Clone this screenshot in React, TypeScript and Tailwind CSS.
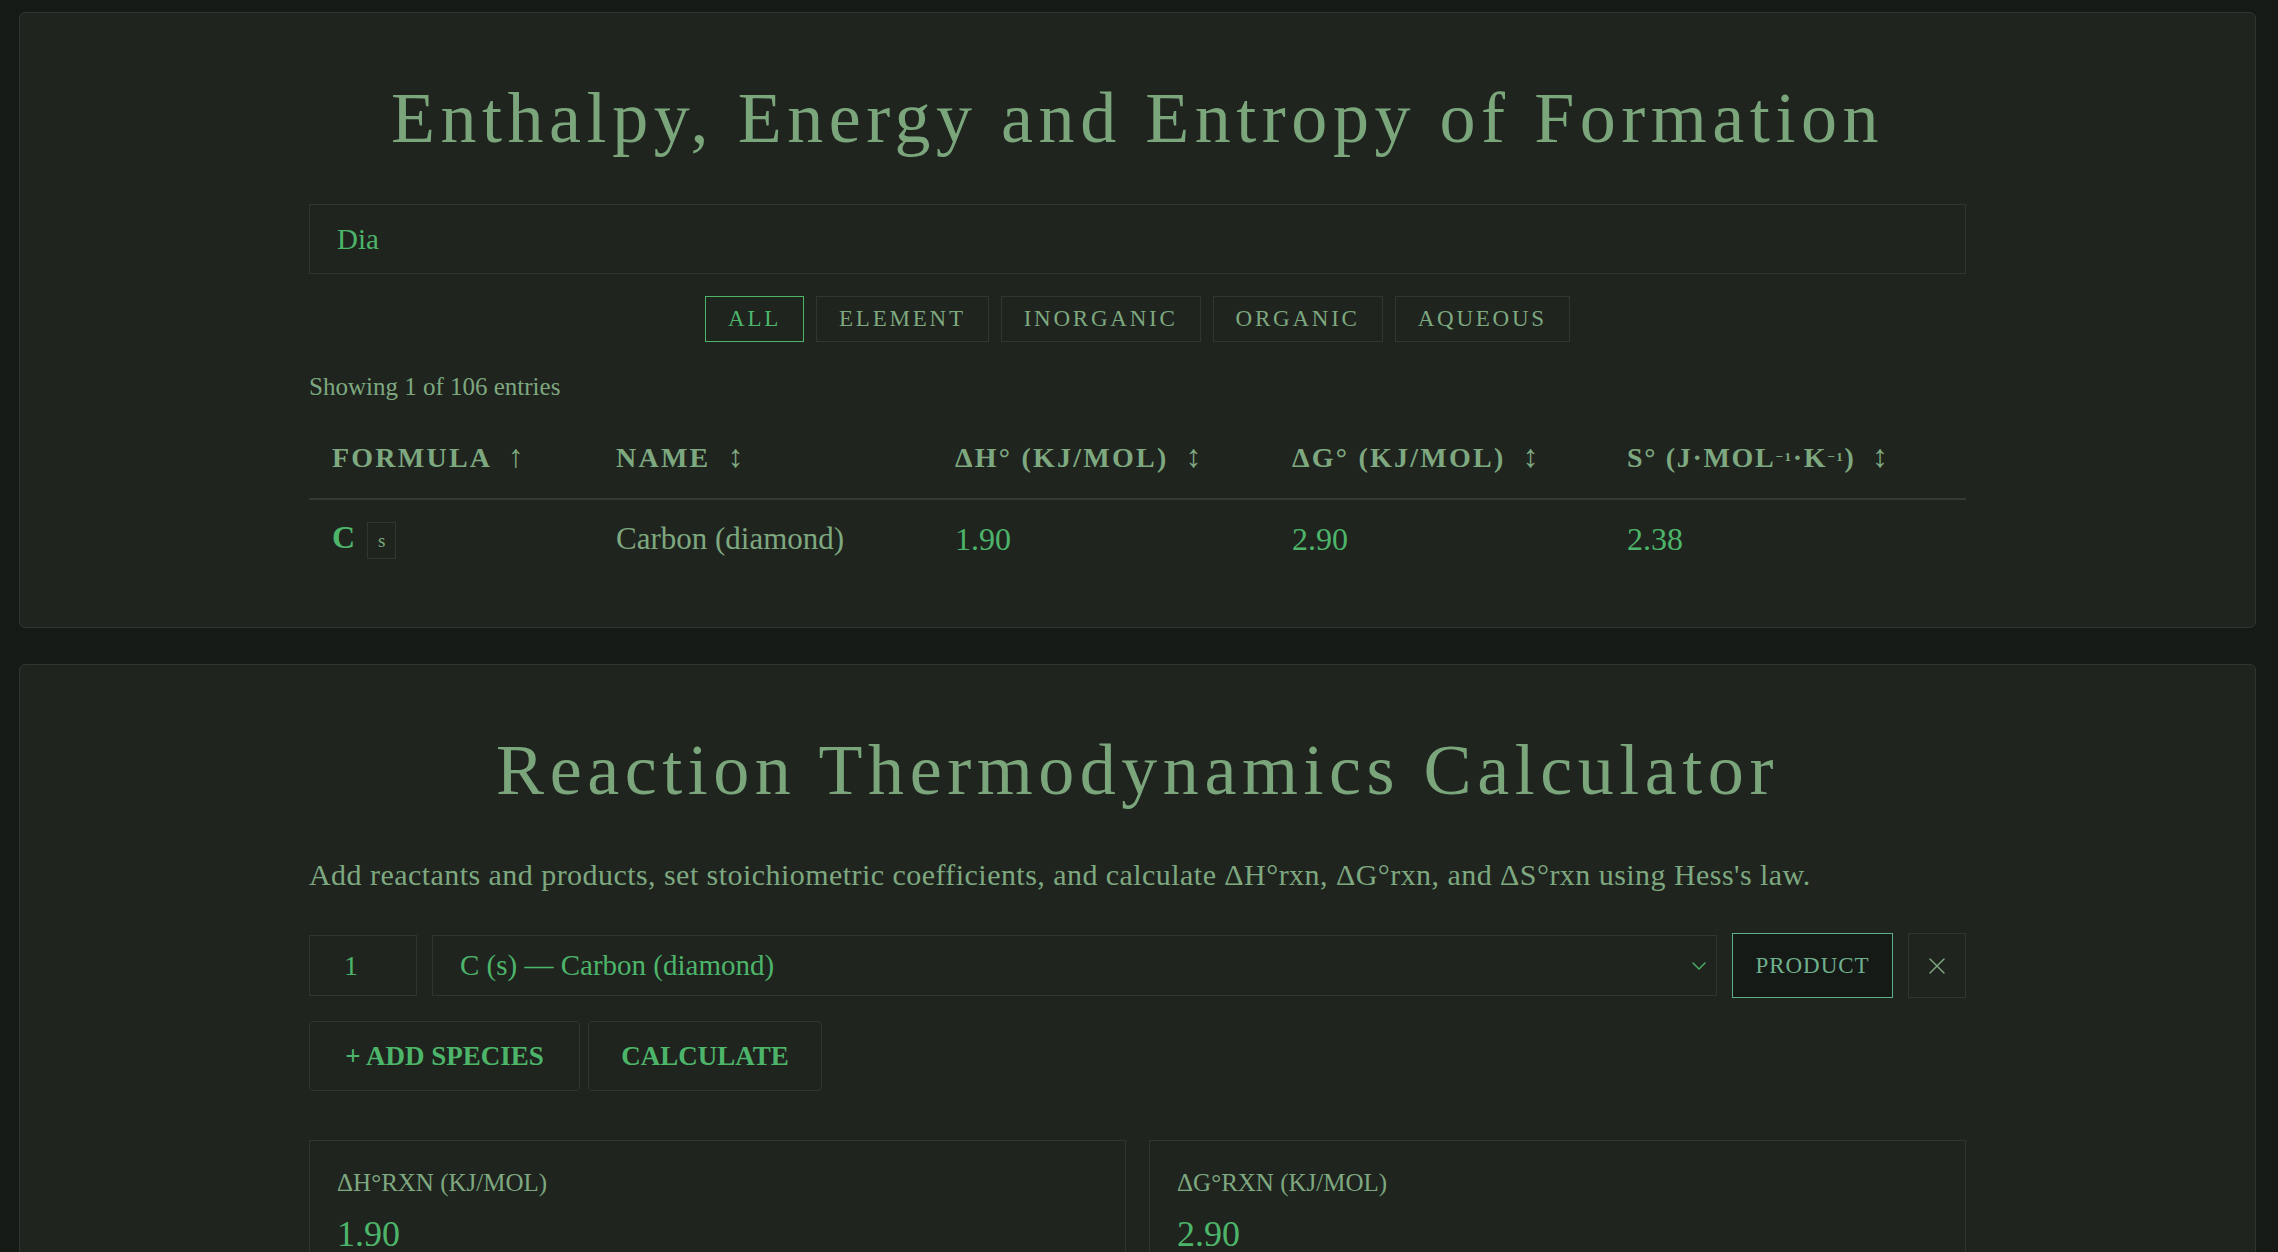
import { useState } from 'react';
import { ChevronDown, X } from 'lucide-react';

interface Species {
  formula: string;
  phase: string;
  name: string;
  dH: number;
  dG: number;
  S: number;
}

const species: Species[] = [
  { formula: 'C', phase: 's', name: 'Carbon (diamond)', dH: 1.9, dG: 2.9, S: 2.38 },
];

const filters = ['All', 'Element', 'Inorganic', 'Organic', 'Aqueous'];

const results = [
  { label: 'ΔH°rxn (kJ/mol)', value: '1.90' },
  { label: 'ΔG°rxn (kJ/mol)', value: '2.90' },
  { label: 'ΔS°rxn (J/mol·K)', value: '2.38' },
];

const serif = { fontFamily: '"Liberation Serif", "Times New Roman", serif' };

export default function App() {
  const [search, setSearch] = useState('Dia');
  const [activeFilter, setActiveFilter] = useState('All');
  const [coef, setCoef] = useState('1');

  return (
    <div className="min-h-screen bg-[#161a16] pl-[19px] pr-[22px] pt-[12px] pb-10 text-[#7ea87f]" style={serif}>
      {/* formation table */}
      <section className="rounded-md border border-[#2f352f] bg-[#1f241f] pt-[62px] pb-[50px]">
        <h1 className="text-center text-[72px] leading-[86px] tracking-[0.077em] text-[#7ba67c] mb-[43px]">
          Enthalpy, Energy and Entropy of Formation
        </h1>
        <div className="mx-auto w-[1657px]">
          <input
            value={search}
            onChange={(e) => setSearch(e.target.value)}
            className="block h-[70px] w-full border border-[#2f352f] bg-[#1f241f] px-[27px] text-[29px] text-[#4db56a] outline-none"
          />
          <div className="mt-[22px] flex justify-center gap-[12px]">
            {filters.map((f) => (
              <button
                key={f}
                onClick={() => setActiveFilter(f)}
                className={`h-[46px] border px-[22px] text-[23px] uppercase tracking-[0.12em] ${
                  activeFilter === f
                    ? 'border-[#4db56a] text-[#4db56a]'
                    : 'border-[#30372f] text-[#7ea87f]'
                }`}
              >
                {f}
              </button>
            ))}
          </div>
          <p className="mt-[30px] text-[25px] leading-[30px]">Showing 1 of 106 entries</p>
          <table className="mt-[16px] w-full table-fixed border-collapse text-left">
            <thead>
              <tr className="border-b-2 border-[#333a33]">
                <th className="w-[284px] px-[23px] pt-[20px] pb-[20px] text-[28px] leading-[40px] font-bold uppercase tracking-[0.08em]">
                  Formula <span className="ml-2 text-[32px] leading-none font-normal">↑</span>
                </th>
                <th className="w-[339px] px-[23px] text-[28px] leading-[40px] font-bold uppercase tracking-[0.08em]">
                  Name <span className="ml-2 text-[32px] leading-none font-normal">↕</span>
                </th>
                <th className="w-[337px] px-[23px] text-[28px] leading-[40px] font-bold uppercase tracking-[0.08em]">
                  ΔH° (kJ/mol) <span className="ml-2 text-[32px] leading-none font-normal">↕</span>
                </th>
                <th className="w-[335px] px-[23px] text-[28px] leading-[40px] font-bold uppercase tracking-[0.08em]">
                  ΔG° (kJ/mol) <span className="ml-2 text-[32px] leading-none font-normal">↕</span>
                </th>
                <th className="px-[23px] text-[28px] leading-[40px] font-bold uppercase tracking-[0.06em]">
                  S° (J·mol<sup className="text-[13px] leading-none">−1</sup>·K<sup className="text-[13px] leading-none">−1</sup>) <span className="ml-2 text-[32px] leading-none font-normal">↕</span>
                </th>
              </tr>
            </thead>
            <tbody>
              {species.map((s) => (
                <tr key={s.name}>
                  <td className="px-[23px] pt-[18px] pb-[18px] text-[31px] leading-[40px]">
                    <span className="font-bold text-[32px] leading-none text-[#4db56a]">{s.formula}</span>
                    <span className="ml-[12px] inline-flex h-[37px] w-[29px] items-center justify-center border border-[#30372f] align-middle text-[19px] leading-none">
                      {s.phase}
                    </span>
                  </td>
                  <td className="px-[23px] text-[31px] leading-[40px]">{s.name}</td>
                  <td className="px-[23px] text-[32px] leading-[40px] text-[#4db56a]">{s.dH.toFixed(2)}</td>
                  <td className="px-[23px] text-[32px] leading-[40px] text-[#4db56a]">{s.dG.toFixed(2)}</td>
                  <td className="px-[23px] text-[32px] leading-[40px] text-[#4db56a]">{s.S.toFixed(2)}</td>
                </tr>
              ))}
            </tbody>
          </table>
        </div>
      </section>

      {/* reaction calculator */}
      <section className="mt-[36px] rounded-md border border-[#2f352f] bg-[#1f241f] pt-[62px] pb-[50px]">
        <h1 className="text-center text-[72px] leading-[86px] tracking-[0.077em] text-[#7ba67c] mb-[44px]">
          Reaction Thermodynamics Calculator
        </h1>
        <div className="mx-auto w-[1657px]">
          <p className="text-[30px] leading-[36px] tracking-[0.015em]">
            Add reactants and products, set stoichiometric coefficients, and calculate ΔH°rxn, ΔG°rxn, and ΔS°rxn using Hess's law.
          </p>
          <div className="mt-[40px] flex items-center gap-[15px]">
            <input
              value={coef}
              onChange={(e) => setCoef(e.target.value)}
              className="h-[61px] w-[108px] border border-[#2f352f] bg-[#1f241f] pl-[34px] text-[28px] text-[#4db56a] outline-none"
            />
            <div className="relative flex h-[61px] flex-1 items-center border border-[#2f352f] bg-[#1f241f] pl-[27px] text-[29px] text-[#4db56a]">
              C (s) — Carbon (diamond)
              <ChevronDown className="absolute right-[5px] top-1/2 -translate-y-1/2" size={24} strokeWidth={1.4} />
            </div>
            <button className="h-[65px] w-[161px] border border-[#5fae8a] bg-[#161a16] text-[23px] uppercase tracking-[0.04em] text-[#6fb08e]">
              Product
            </button>
            <button className="flex h-[65px] w-[58px] items-center justify-center border border-[#30372f] text-[#7ea87f]">
              <X size={28} strokeWidth={1.2} />
            </button>
          </div>
          <div className="mt-[23px] flex gap-[8px]">
            <button className="h-[70px] w-[271px] rounded-[4px] border border-[#30372f] text-[27px] font-bold uppercase text-[#4db56a]">
              + Add Species
            </button>
            <button className="h-[70px] w-[234px] rounded-[4px] border border-[#30372f] text-[27px] font-bold uppercase text-[#4db56a]">
              Calculate
            </button>
          </div>
          <div className="mt-[49px] grid grid-cols-2 gap-[23px]">
            {results.map((r) => (
              <div key={r.label} className="border border-[#2f352f] px-[27px] pt-[27px] pb-[28px]">
                <div className="text-[25px] leading-[30px] uppercase">{r.label}</div>
                <div className="mt-[16px] text-[36px] leading-[40px] text-[#4db56a]">{r.value}</div>
              </div>
            ))}
          </div>
        </div>
      </section>
    </div>
  );
}
